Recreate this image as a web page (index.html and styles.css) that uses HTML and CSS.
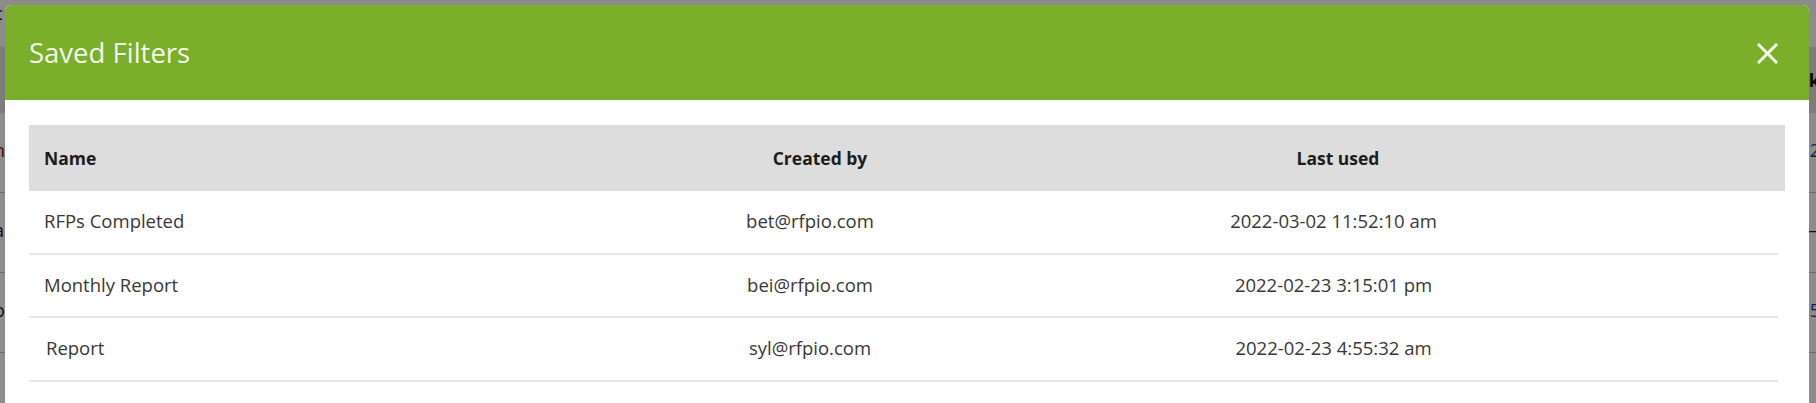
FILE: index.html
```html
<!DOCTYPE html>
<html lang="en">
<head>
<meta charset="utf-8">
<title>Saved Filters</title>
<link rel="stylesheet" href="styles.css">
</head>
<body>
<div class="page">
  <div class="page-top"><span class="frag frag-l">c</span></div>
  <div class="page-band"><span class="frag frag-l"></span><span class="frag frag-r dark">k</span></div>
  <div class="page-row"><span class="frag frag-l red">h</span><span class="frag frag-r blue">2</span></div>
  <div class="page-row"><span class="frag frag-l">a</span><span class="frag frag-r">—</span></div>
  <div class="page-row"><span class="frag frag-l">o</span><span class="frag frag-r blue">5</span></div>
  <div class="page-row"></div>
</div>
<div class="overlay"></div>
<div class="modal">
  <div class="modal-header">
    <h2 class="modal-title">Saved Filters</h2>
    <button class="close" type="button" aria-label="Close">
      <svg width="21" height="21" viewBox="0 0 21 21"><path d="M2 2 L19 19 M19 2 L2 19" stroke="currentColor" stroke-width="3" stroke-linecap="square" fill="none"/></svg>
    </button>
  </div>
  <div class="modal-body">
    <div class="grid head">
      <div class="cell name">Name</div>
      <div class="cell by">Created by</div>
      <div class="cell used">Last used</div>
    </div>
    <div class="grid row">
      <div class="cell name">RFPs Completed</div>
      <div class="cell by">bet@rfpio.com</div>
      <div class="cell used">2022-03-02 11:52:10 am</div>
    </div>
    <div class="grid row">
      <div class="cell name">Monthly Report</div>
      <div class="cell by">bei@rfpio.com</div>
      <div class="cell used">2022-02-23 3:15:01 pm</div>
    </div>
    <div class="grid row">
      <div class="cell name indent">Report</div>
      <div class="cell by">syl@rfpio.com</div>
      <div class="cell used">2022-02-23 4:55:32 am</div>
    </div>
  </div>
</div>
</body>
</html>
```
FILE: styles.css
```css
html, body {
  margin: 0;
  padding: 0;
}
body {
  width: 1816px;
  height: 403px;
  overflow: hidden;
  position: relative;
  background: #ffffff;
  font-family: "Open Sans", "Noto Sans", sans-serif;
}

/* underlying page (mostly hidden by the modal) */
.page {
  display: flex;
  flex-direction: column;
}
.page-top {
  height: 47px;
  box-sizing: border-box;
  display: flex;
  align-items: flex-start;
  justify-content: space-between;
  padding-top: 2px;
  font-size: 18px;
  line-height: 22px;
  color: #111;
  background: #fff;
}
.page-band {
  height: 66px;
  background: #e2e2e2;
  display: flex;
  align-items: center;
  justify-content: space-between;
  font-size: 18px;
  font-weight: 700;
  color: #111;
}
.page-row {
  height: 80px;
  box-sizing: border-box;
  border-bottom: 1px solid #c4c4c4;
  display: flex;
  align-items: center;
  justify-content: space-between;
  font-size: 18px;
  color: #222;
  padding-bottom: 6px;
}
.frag-l {
  margin-left: -6px;
}
.frag-r {
  margin-right: -4px;
}
.red { color: #7a0d0d; }
.blue { color: #1a3c8c; }

.overlay {
  position: absolute;
  inset: 0;
  background: rgba(0, 0, 0, 0.45);
}

/* modal */
.modal {
  position: absolute;
  left: 5px;
  top: 5px;
  right: 7px;
  bottom: 0;
  background: #ffffff;
  border-radius: 6px 6px 0 0;
  overflow: hidden;
}
.modal-header {
  height: 95px;
  background: #7baf2b;
  display: flex;
  align-items: center;
  justify-content: space-between;
  padding: 0 31px 0 24px;
}
.modal-title {
  margin: 0;
  font-size: 27.5px;
  font-weight: 400;
  line-height: 1;
  color: rgba(255, 255, 255, 0.92);
}
.close {
  width: 21px;
  height: 21px;
  padding: 0;
  border: 0;
  background: none;
  color: rgba(255, 255, 255, 0.92);
  display: block;
  margin-top: 1px;
}
.close svg {
  display: block;
}

.modal-body {
  padding: 25px 24px 0;
}
.grid {
  display: grid;
  grid-template-columns: 651px 270px 1fr;
  align-items: center;
}
.head {
  height: 66px;
  background: #dddddd;
  font-size: 17.5px;
  font-weight: 700;
  color: #1c1c1c;
}
.row {
  height: 63.5px;
  box-sizing: border-box;
  margin-right: 7px;
  border-bottom: 2px solid #e6e6e6;
  font-size: 18.5px;
  color: #383838;
  padding-bottom: 2px;
}
.cell {
  white-space: nowrap;
}
.cell.name {
  padding-left: 15px;
}
.cell.indent {
  padding-left: 17px;
}
.head .by {
  text-align: center;
  padding-left: 10px;
}
.row .by {
  text-align: center;
  padding-right: 10px;
}
.head .used {
  text-align: center;
  padding-right: 59px;
}
.row .used {
  text-align: center;
  padding-right: 61px;
}
```
